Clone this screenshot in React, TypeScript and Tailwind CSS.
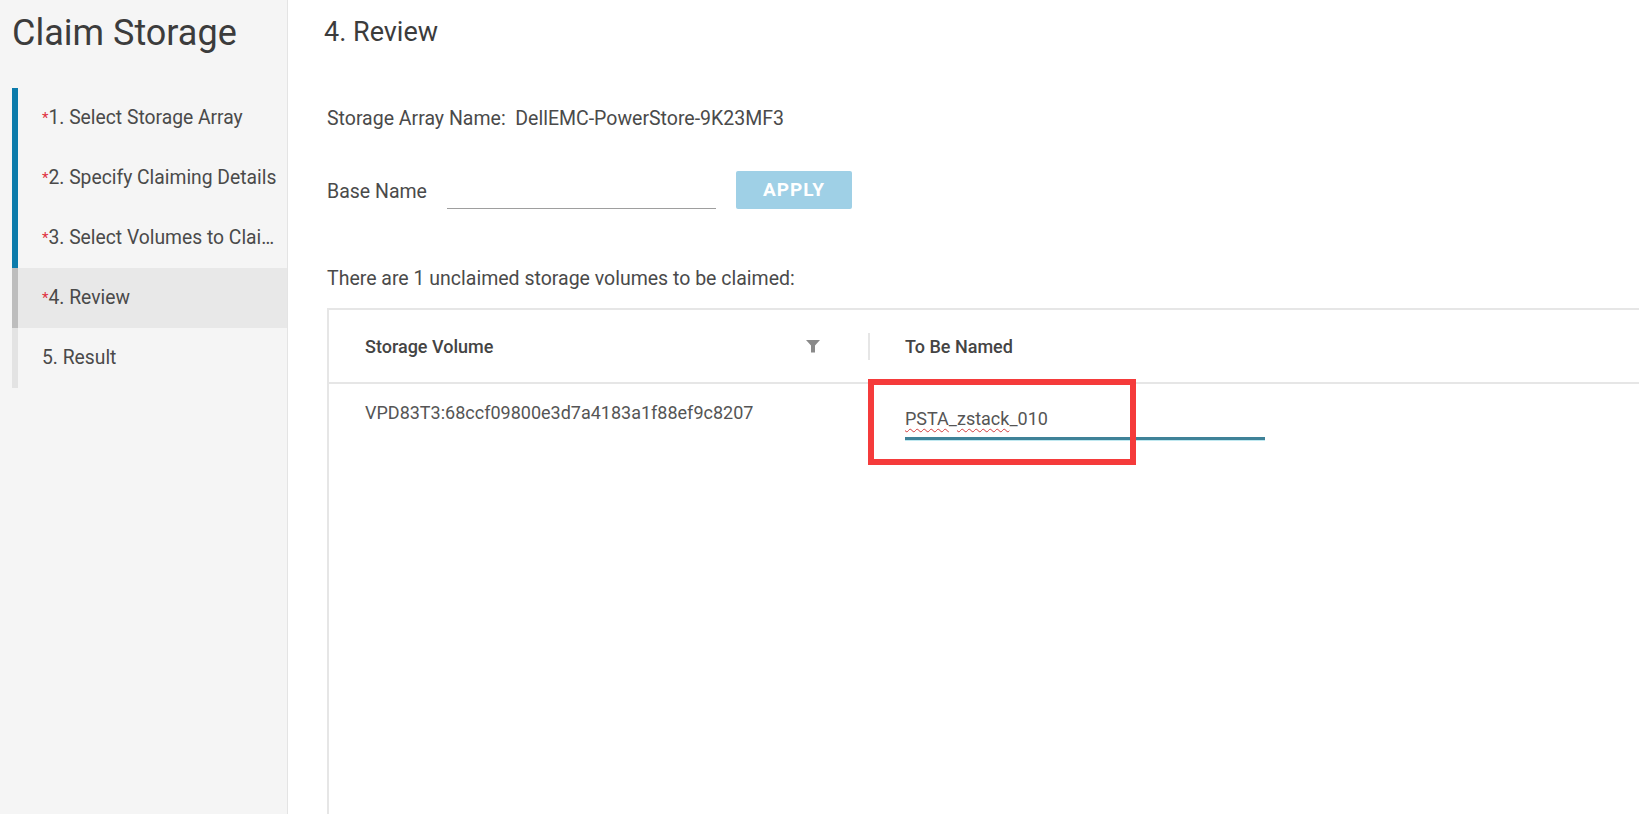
import React from "react";

const STEPS = [
  { label: "1. Select Storage Array", required: true, state: "done" },
  { label: "2. Specify Claiming Details", required: true, state: "done" },
  { label: "3. Select Volumes to Clai…", required: true, state: "done" },
  { label: "4. Review", required: true, state: "active" },
  { label: "5. Result", required: false, state: "todo" },
];

function FilterIcon() {
  return (
    <svg width="14" height="13" viewBox="0 0 14 13" className="text-[#8a8a8a]">
      <polygon points="0,0 14,0 9,5.5 9,12.5 5,12.5 5,5.5" fill="currentColor" />
    </svg>
  );
}

export default function App() {
  return (
    <div className="flex h-[814px] w-full overflow-hidden bg-white font-['Roboto',sans-serif] text-[#4a4a4a]">
      {/* wizard steps */}
      <aside className="w-[288px] shrink-0 bg-[#f5f5f5] border-r border-[#e4e4e4]">
        <h1 className="pl-[12px] pt-[12px] text-[36px] leading-[42px] text-[#3c3c3c]">Claim Storage</h1>
        <ul className="ml-[12px] mt-[34px]">
          {STEPS.map((s) => (
            <li
              key={s.label}
              className={`h-[60px] flex items-center border-l-[6px] pl-[24px] pr-[2px] text-[19.3px] ${
                s.state === "done"
                  ? "border-[#0b7bab]"
                  : s.state === "active"
                  ? "border-[#bdbdbd] bg-[#e8e8e8]"
                  : "border-[#e3e3e3]"
              }`}
            >
              <span className="whitespace-nowrap">
                {s.required && <span className="text-[#e0303e] text-[15px] relative -top-[1px]">*</span>}
                {s.label}
              </span>
            </li>
          ))}
        </ul>
      </aside>

      {/* review page */}
      <main className="flex-1 flex flex-col pl-[39px] min-w-0">
        <h2 className="pt-[15px] -ml-[3px] text-[27px] leading-[34px] text-[#3c3c3c]">4. Review</h2>

        <div className="mt-[59px] text-[19.5px] leading-[22px]">
          Storage Array Name:&nbsp;&nbsp;DellEMC-PowerStore-9K23MF3
        </div>

        <div className="mt-[41px] flex items-center h-[38px]">
          <span className="w-[120px] pt-[4px] text-[19.5px]">Base Name</span>
          <div className="w-[269px] h-[38px] border-b border-[#9e9e9e]" />
          <button className="ml-[20px] w-[116px] h-[38px] rounded-[2px] bg-[#9fd0e6] text-white font-bold text-[19px] tracking-[1px]">
            APPLY
          </button>
        </div>

        <div className="mt-[59px] text-[19.5px] leading-[22px]">
          There are 1 unclaimed storage volumes to be claimed:
        </div>

        <div className="mt-[18px] flex-1 border-l-2 border-t-2 border-[#e6e6e6]">
          <div className="flex h-[74px] items-center border-b-2 border-[#e6e6e6] text-[18px] font-medium text-[#444]">
            <div className="w-[539px] flex items-center pl-[36px] pr-[48px]">
              <span className="flex-1">Storage Volume</span>
              <FilterIcon />
            </div>
            <div className="w-[2px] h-[27px] bg-[#e6e6e6]" />
            <div className="pl-[35px]">To Be Named</div>
          </div>

          <div className="flex text-[18px] leading-[22px]">
            <div className="w-[539px] pl-[36px] pt-[18px] text-[#555]">VPD83T3:68ccf09800e3d7a4183a1f88ef9c8207</div>
            <div className="relative pl-[37px] pt-[24px]">
              <div className="w-[360px] pb-[7px] border-b-[3px] border-[#3f8298] shadow-[0_1px_0_#bfe8f0] text-[#555]">
                <span className="underline decoration-wavy decoration-[#d23c3c] decoration-1 underline-offset-[3px]">PSTA</span>_
                <span className="underline decoration-wavy decoration-[#d23c3c] decoration-1 underline-offset-[3px]">zstack</span>_010
              </div>
              <div className="absolute -top-[5px] left-0 w-[268px] h-[86px] border-[6px] border-[#f53b3b]" />
            </div>
          </div>
        </div>
      </main>
    </div>
  );
}
